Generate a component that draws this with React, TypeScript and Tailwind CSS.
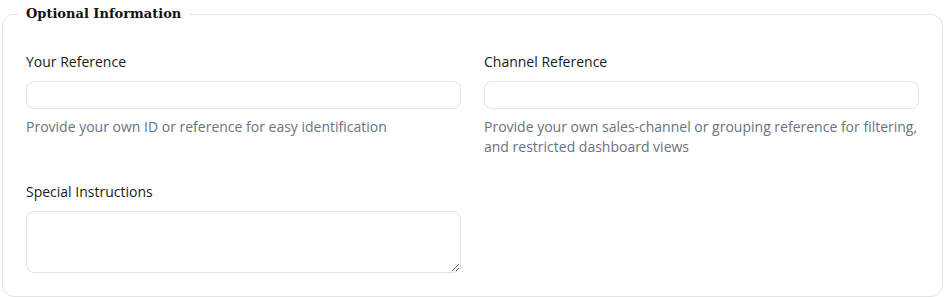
import React from "react";

export default function App() {
  const sans = { fontFamily: '"Open Sans", "Noto Sans", sans-serif' };
  return (
    <div className="bg-white w-[950px] h-[297px] pt-[4px] pl-[2px]" style={sans}>
      <fieldset className="w-[941px] border border-[#e3e3e3] rounded-[12px] px-[23px] pt-[28px] pb-[23px]">
        <legend
          className="-ml-[8px] px-[8px] text-[13px] leading-[20px] font-bold text-[#111]"
          style={{ fontFamily: '"DejaVu Serif", "Liberation Serif", serif' }}
        >
          Optional Information
        </legend>
        <div className="grid grid-cols-2 gap-x-[23px] gap-y-[25px]">
          <div className="flex flex-col">
            <label className="text-[14px] leading-[20px] text-[#1a1a1a]">Your Reference</label>
            <input className="mt-[9px] h-[28px] border border-[#e3e3e3] rounded-[8px] outline-none" />
            <p className="mt-[8px] text-[14px] leading-[20px] text-[#6b7280]">
              Provide your own ID or reference for easy identification
            </p>
          </div>
          <div className="flex flex-col">
            <label className="text-[14px] leading-[20px] text-[#1a1a1a]">Channel Reference</label>
            <input className="mt-[9px] h-[28px] border border-[#e3e3e3] rounded-[8px] outline-none" />
            <p className="mt-[8px] text-[14px] leading-[20px] text-[#6b7280]">
              Provide your own sales-channel or grouping reference for filtering, and restricted dashboard views
            </p>
          </div>
          <div className="flex flex-col">
            <label className="text-[14px] leading-[20px] text-[#1a1a1a]">Special Instructions</label>
            <textarea className="mt-[9px] h-[62px] border border-[#e3e3e3] rounded-[8px] outline-none block" />
          </div>
        </div>
      </fieldset>
    </div>
  );
}
